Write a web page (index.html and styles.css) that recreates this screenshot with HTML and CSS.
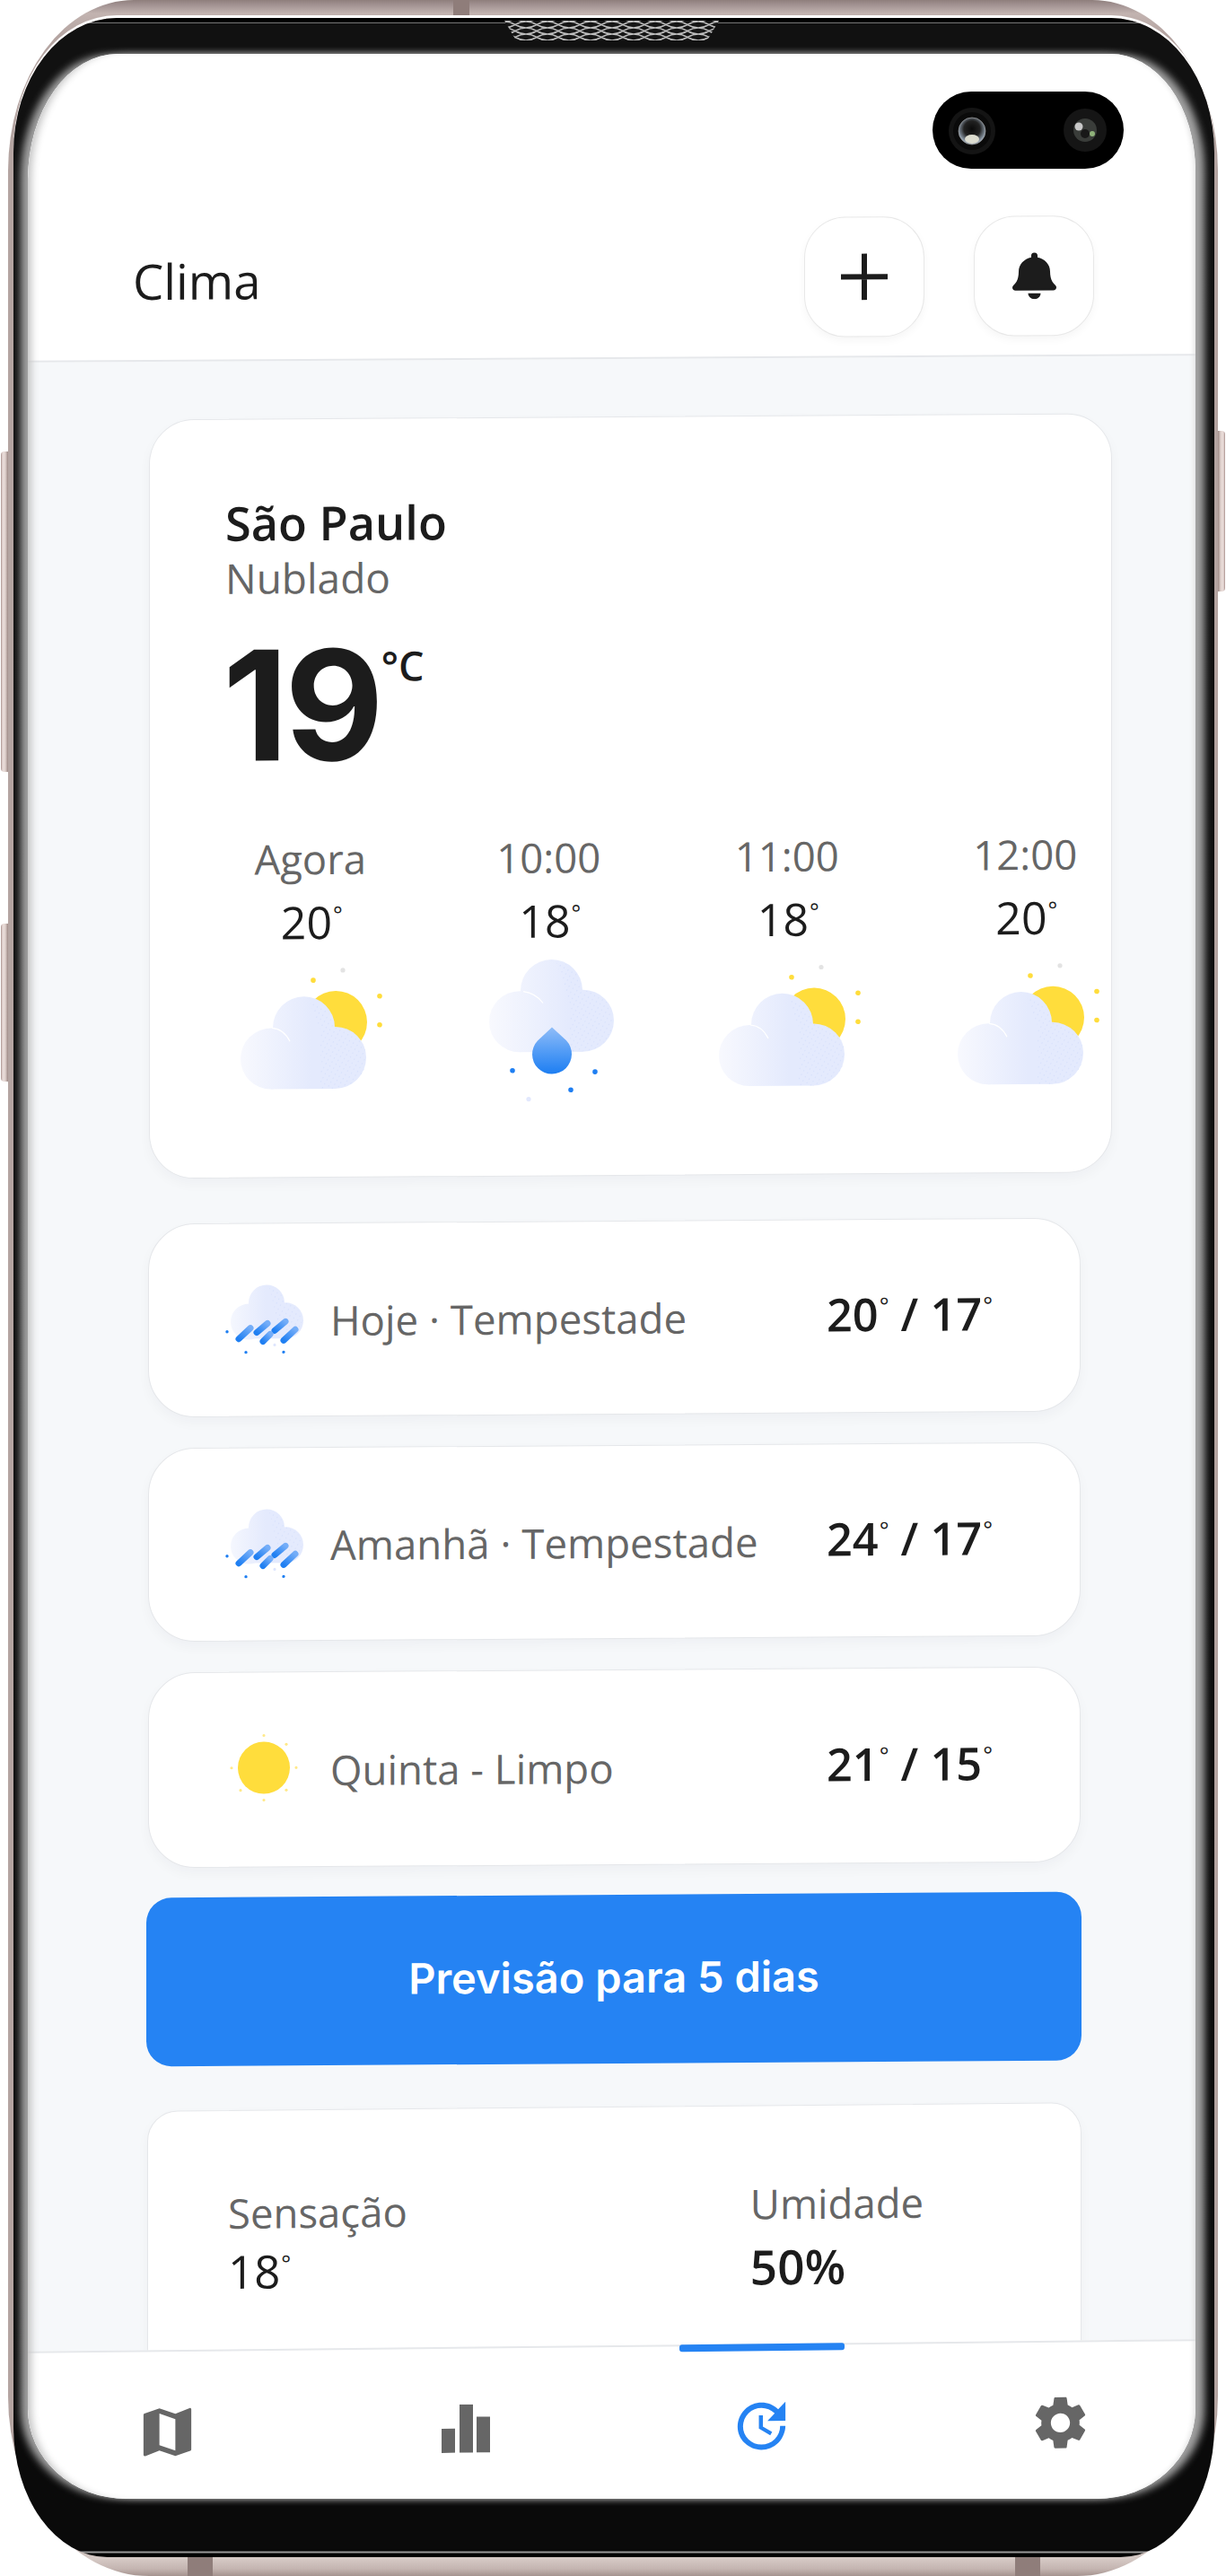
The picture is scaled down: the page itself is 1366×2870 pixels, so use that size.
FILE: index.html
```html
<!DOCTYPE html>
<html lang="pt-BR">
<head>
<meta charset="utf-8">
<title>Clima</title>
<link rel="stylesheet" href="styles.css">
</head>
<body>
<svg class="defs" width="0" height="0" aria-hidden="true">
  <defs>
    <linearGradient id="cloudA" gradientUnits="userSpaceOnUse" x1="5" y1="0" x2="85" y2="0">
      <stop offset="0" stop-color="#f8f9fe"/><stop offset="1" stop-color="#e4eafd"/>
    </linearGradient>
    <linearGradient id="cloudB" gradientUnits="userSpaceOnUse" x1="5" y1="0" x2="95" y2="0">
      <stop offset="0" stop-color="#f8f9fe"/><stop offset="1" stop-color="#e4eafd"/>
    </linearGradient>
    <linearGradient id="cloudC" gradientUnits="userSpaceOnUse" x1="8" y1="0" x2="50" y2="0">
      <stop offset="0" stop-color="#f6f8fe"/><stop offset="1" stop-color="#e4eafd"/>
    </linearGradient>
    <linearGradient id="dropG" x1="0" y1="0" x2="0" y2="1">
      <stop offset="0" stop-color="#90bdf8"/><stop offset="0.45" stop-color="#5aa0f6"/><stop offset="1" stop-color="#1d7ef2"/>
    </linearGradient>
    <linearGradient id="pill" x1="0" y1="1" x2="1" y2="0">
      <stop offset="0" stop-color="#1f7ff2"/><stop offset="1" stop-color="#74adf8"/>
    </linearGradient>
    <pattern id="stipple" width="5" height="5" patternUnits="userSpaceOnUse" patternTransform="rotate(30)">
      <circle cx="2.5" cy="2.5" r="0.6" fill="#c9d5fb"/>
    </pattern>
    <pattern id="mesh" width="48" height="14" patternUnits="userSpaceOnUse" y="1">
      <path d="M0 0 C12 0 12 7 24 7 C36 7 36 0 48 0 M0 7 C12 7 12 0 24 0 C36 0 36 7 48 7 M0 7 C12 7 12 14 24 14 C36 14 36 7 48 7 M0 14 C12 14 12 7 24 7 C36 7 36 14 48 14" fill="none" stroke="#bdbdbd" stroke-width="1.5"/>
    </pattern>
    <symbol id="cloud-sun" viewBox="0 0 170 140">
      <circle cx="113" cy="62" r="35" fill="#ffdd3c"/>
      <circle cx="88" cy="15" r="2.8" fill="#ffdd3c"/>
      <circle cx="162" cy="33" r="2.8" fill="#ffdd3c"/>
      <circle cx="162" cy="65" r="2.8" fill="#ffdd3c"/>
      <circle cx="121" cy="4" r="2.6" fill="#e3e3e3"/>
      <g fill="url(#cloudA)">
        <circle cx="41" cy="102" r="34"/>
        <circle cx="77.5" cy="67.5" r="34.5"/>
        <circle cx="112.5" cy="101.5" r="34.5"/>
        <rect x="41" y="70" width="72" height="66"/>
      </g>
      <path d="M84 40 A34 34 0 0 1 112 67 A34 34 0 0 1 147 101 A34 34 0 0 1 112 136 H96 V70 Z" fill="url(#stipple)" opacity=".7"/>
      <path d="M42 68 Q55 69 62 83" fill="none" stroke="#fff" stroke-width="1.2"/>
    </symbol>
    <symbol id="cloud-drop" viewBox="0 0 150 175">
      <g fill="url(#cloudB)">
        <circle cx="40" cy="79.500" r="34"/>
        <circle cx="75.500" cy="45" r="34.500"/>
        <circle cx="110.500" cy="79" r="34.500"/>
        <rect x="40" y="60" width="70" height="53.500"/>
      </g>
      <path d="M80 12 A34 34 0 0 1 109 45 A34 34 0 0 1 144 79 A34 34 0 0 1 110 113 H96 V60 Z" fill="url(#stipple)" opacity=".7"/>
      <path d="M44 46 Q58 48 66 59" fill="none" stroke="#fff" stroke-width="1.200"/>
      <path d="M76 86 L60 101 A22 22 0 1 0 92 101 Z" fill="url(#dropG)"/>
      <circle cx="32" cy="134" r="2.800" fill="#1f7ff2"/>
      <circle cx="124" cy="136" r="2.800" fill="#1f7ff2"/>
      <circle cx="97" cy="156" r="2.800" fill="#1f7ff2"/>
      <circle cx="50" cy="166" r="2.600" fill="#e2e8fd"/>
    </symbol>
    <symbol id="cloud-rain" viewBox="0 0 100 90">
      <g fill="url(#cloudC)">
        <circle cx="31" cy="48" r="20"/>
        <circle cx="51" cy="27" r="20"/>
        <circle cx="72" cy="47" r="20"/>
        <rect x="31" y="35" width="41" height="32"/>
      </g>
      <path d="M54 10 A20 20 0 0 1 71 27 A20 20 0 0 1 90 47 V58 H66 Z" fill="url(#stipple)" opacity=".7"/>
      <g fill="none" stroke="url(#pill)" stroke-width="7" stroke-linecap="round">
        <path d="M20 67 L33 55"/>
        <path d="M40 60 L52 50"/>
        <path d="M60 58 L72 48"/>
        <path d="M47 70 L55 62"/>
        <path d="M70 69 L83 57"/>
      </g>
      <circle cx="7" cy="59" r="1.700" fill="#1f7ff2"/>
      <circle cx="28" cy="82" r="1.700" fill="#1f7ff2"/>
      <circle cx="70" cy="82" r="1.700" fill="#1f7ff2"/>
      <circle cx="60" cy="74" r="1.600" fill="#dfe6fd"/>
    </symbol>
  </defs>
</svg>

<div class="device">
  <span class="key key-left-a"></span>
  <span class="key key-left-b"></span>
  <span class="key key-right"></span>
  <span class="seam seam-top"></span>
  <span class="seam seam-bottom-a"></span>
  <span class="seam seam-bottom-b"></span>

  <div class="bezel">
    <svg class="speaker" viewBox="0 0 239 22" aria-hidden="true">
      <polygon points="0,0 239,0 226,22 13,22" fill="#161616"/>
      <polygon points="0,0 239,0 226,22 13,22" fill="url(#mesh)"/>
    </svg>

    <div class="screen">
      <div class="camera">
        <svg class="lens lens-a" viewBox="0 0 52 52" aria-hidden="true">
          <defs>
            <radialGradient id="lensA" cx="0.5" cy="0.42" r="0.6">
              <stop offset="0" stop-color="#0a0a0a"/><stop offset="0.5" stop-color="#222"/><stop offset="0.85" stop-color="#8a97a5"/><stop offset="1" stop-color="#a9b4c0"/>
            </radialGradient>
          </defs>
          <circle cx="26" cy="26" r="26" fill="#141414"/>
          <circle cx="26" cy="26" r="21" fill="#0a0a0a"/>
          <circle cx="26" cy="26" r="15" fill="url(#lensA)" stroke="#aaa" stroke-width=".6"/>
          <ellipse cx="26" cy="35" rx="8" ry="5" fill="#dcdccf"/>
        </svg>
        <svg class="lens lens-b" viewBox="0 0 48 48" aria-hidden="true">
          <circle cx="24" cy="24" r="24" fill="#151515"/>
          <circle cx="24" cy="24" r="13" fill="#3a3d3a"/>
          <circle cx="17" cy="20" r="4.500" fill="#c8c8c8"/>
          <circle cx="32" cy="28" r="3" fill="#8fb27a"/>
          <circle cx="24" cy="28" r="5" fill="#181818"/>
        </svg>
      </div>

      <header class="appbar">
        <h1 class="appbar-title">Clima</h1>
        <div class="appbar-actions">
          <button class="round-btn" type="button" aria-label="Adicionar">
            <svg class="icon-plus" viewBox="0 0 52 52"><path d="M26 0V52M0 26H52" fill="none" stroke="#1c1c1c" stroke-width="6"/></svg>
          </button>
          <button class="round-btn" type="button" aria-label="Notificações">
            <svg class="icon-bell" viewBox="0 0 448 512" preserveAspectRatio="none"><path fill="#1c1c1c" d="M224 512c35.320 0 63.970-28.650 63.970-64H160.030c0 35.350 28.650 64 63.970 64zm215.390-149.710c-19.320-20.760-55.470-51.990-55.470-154.290 0-77.700-54.480-139.900-127.940-155.160V32c0-17.670-14.320-32-31.980-32s-31.980 14.330-31.980 32v20.840C118.560 68.100 64.080 130.300 64.080 208c0 102.300-36.150 133.530-55.470 154.290-6 6.450-8.660 14.160-8.610 21.710.110 16.400 12.980 32 32.100 32h383.800c19.120 0 32-15.600 32.100-32 .050-7.550-2.610-15.270-8.610-21.710z"/></svg>
          </button>
        </div>
      </header>

      <main class="content">
        <section class="card current">
          <h2 class="city">São Paulo</h2>
          <p class="cond">Nublado</p>
          <div class="now">
            <span class="now-temp">19</span><span class="now-unit">°C</span>
          </div>
          <div class="hours">
            <div class="hour">
              <span class="hour-label">Agora</span>
              <span class="hour-temp">20<sup class="deg">°</sup></span>
              <svg class="hour-icon"><use href="#cloud-sun"/></svg>
            </div>
            <div class="hour">
              <span class="hour-label">10:00</span>
              <span class="hour-temp">18<sup class="deg">°</sup></span>
              <svg class="hour-icon hour-icon-rain"><use href="#cloud-drop"/></svg>
            </div>
            <div class="hour">
              <span class="hour-label">11:00</span>
              <span class="hour-temp">18<sup class="deg">°</sup></span>
              <svg class="hour-icon"><use href="#cloud-sun"/></svg>
            </div>
            <div class="hour">
              <span class="hour-label">12:00</span>
              <span class="hour-temp">20<sup class="deg">°</sup></span>
              <svg class="hour-icon"><use href="#cloud-sun"/></svg>
            </div>
          </div>
        </section>

        <section class="days">
          <article class="card day">
            <svg class="day-icon"><use href="#cloud-rain"/></svg>
            <span class="day-name">Hoje · Tempestade</span>
            <span class="day-temp">20<sup class="deg">°</sup> / 17<sup class="deg">°</sup></span>
          </article>
          <article class="card day">
            <svg class="day-icon"><use href="#cloud-rain"/></svg>
            <span class="day-name">Amanhã · Tempestade</span>
            <span class="day-temp">24<sup class="deg">°</sup> / 17<sup class="deg">°</sup></span>
          </article>
          <article class="card day day-clear">
            <svg class="day-icon" viewBox="0 0 100 90">
              <circle cx="50" cy="45" r="29" fill="#ffdd3c"/>
              <g fill="#ffe98a">
                <circle cx="50" cy="9" r="1.600"/><circle cx="14" cy="45" r="1.600"/><circle cx="86" cy="45" r="1.600"/><circle cx="50" cy="81" r="1.600"/>
                <circle cx="24" cy="70" r="1.600"/><circle cx="75" cy="70" r="1.600"/><circle cx="75" cy="19" r="1.600"/>
              </g>
            </svg>
            <span class="day-name">Quinta - Limpo</span>
            <span class="day-temp">21<sup class="deg">°</sup> / 15<sup class="deg">°</sup></span>
          </article>
        </section>

        <button class="forecast-btn" type="button">Previsão para 5 dias</button>

        <section class="card stats">
          <div class="stat">
            <span class="stat-label">Sensação</span>
            <span class="stat-value">18<sup class="deg">°</sup></span>
          </div>
          <div class="stat stat-right">
            <span class="stat-label">Umidade</span>
            <span class="stat-value stat-strong">50%</span>
          </div>
        </section>
      </main>

      <nav class="tabs">
        <a class="tab" href="#" aria-label="Mapa">
          <svg viewBox="0 0 24 24"><path d="M20.500 3l-.160.030L15 5.100 9 3 3.360 4.900c-.210.070-.360.250-.360.480V20.500c0 .280.220.500.500.500l.160-.030L9 18.900l6 2.100 5.640-1.900c.210-.070.360-.250.360-.480V3.500c0-.280-.220-.500-.500-.500zM15 19l-6-2.110V5l6 2.110V19z"/></svg>
        </a>
        <a class="tab" href="#" aria-label="Gráficos">
          <svg viewBox="0 0 54 54"><path d="M0 27h15v27H0zM20 0h15v54H20zM39 14h15v40H39z"/></svg>
        </a>
        <a class="tab tab-active" href="#" aria-label="Histórico">
          <svg viewBox="0 0 24 24"><path d="M21 10.120h-6.780l2.740-2.820c-2.730-2.700-7.150-2.800-9.880-.1-2.730 2.710-2.730 7.080 0 9.790s7.150 2.710 9.880 0C18.320 15.650 19 14.080 19 12.100h2c0 1.980-.88 4.550-2.640 6.290-3.510 3.480-9.210 3.480-12.720 0-3.500-3.470-3.530-9.110-.02-12.580s9.140-3.470 12.650 0L21 3v7.120zM12.500 8v4.250l3.500 2.080-.72 1.210L11 13V8h1.500z"/></svg>
        </a>
        <a class="tab" href="#" aria-label="Ajustes">
          <svg viewBox="0 0 24 24"><path d="M19.140 12.940c.04-.3.060-.61.060-.94 0-.32-.02-.64-.07-.94l2.030-1.580c.18-.14.23-.41.12-.61l-1.920-3.320c-.12-.22-.37-.29-.59-.22l-2.390.96c-.5-.38-1.030-.7-1.620-.94l-.36-2.540c-.04-.24-.24-.41-.48-.41h-3.840c-.24 0-.43.170-.47.410l-.36 2.540c-.59.240-1.130.570-1.620.940l-2.390-.96c-.22-.08-.47 0-.59.220L2.740 8.870c-.12.210-.08.470.12.610l2.030 1.580c-.05.3-.09.630-.09.940s.02.640.07.940l-2.030 1.580c-.18.140-.23.410-.12.610l1.920 3.320c.12.220.37.290.59.220l2.390-.96c.5.380 1.030.7 1.620.94l.36 2.540c.05.240.24.410.48.410h3.840c.24 0 .44-.17.47-.41l.36-2.540c.59-.24 1.130-.56 1.620-.94l2.390.96c.22.080.47 0 .59-.22l1.920-3.320c.12-.22.070-.47-.12-.61l-2.010-1.580zM12 15.600c-1.980 0-3.600-1.620-3.600-3.600s1.620-3.600 3.600-3.600 3.600 1.620 3.600 3.600-1.620 3.600-3.600 3.600z"/></svg>
        </a>
      </nav>
    </div>
  </div>
</div>
</body>
</html>
```

FILE: styles.css
```css
* { box-sizing: border-box; }

html, body {
  margin: 0;
  height: 2870px;
  background: #fff;
  overflow: hidden;
}

.defs { position: absolute; }

/* ---------- device shell ---------- */
.device {
  position: relative;
  width: 1348px;
  height: 2870px;
  margin-left: 9px;
  padding: 20px 4px 21px 6px;
  border-radius: 140px 140px 157px 157px / 190px 190px 200px 200px;
  background: linear-gradient(180deg, #8f7f7c 0, #a09090 5px, #c2b3b0 15px, #b4a4a1 40px, #b4a4a1 2830px, #d6cac6 2850px, #c4b5b1 2862px, #a5938f 2870px);
}

.key {
  position: absolute;
  border-radius: 4px 0 0 4px;
  background: linear-gradient(90deg, #a8908c 0, #eaddda 25%, #e2d4d0 60%, #9c8884 100%);
}
.key-left-a { left: -8px; top: 503px; width: 8px; height: 357px; }
.key-left-b { left: -8px; top: 1029px; width: 8px; height: 176px; }
.key-right { right: -8px; top: 480px; width: 8px; height: 179px; transform: scaleX(-1); }

.seam { position: absolute; background: #8f7d7a; }
.seam-top { left: 496px; top: 0; width: 18px; height: 20px; }
.seam-bottom-a { left: 200px; bottom: 0; width: 28px; height: 21px; }
.seam-bottom-b { left: 1122px; bottom: 0; width: 28px; height: 21px; }

.bezel {
  position: relative;
  height: 100%;
  padding: 40px 21px 65px 16px;
  overflow: hidden;
  border-radius: 115px 115px 105px 105px / 150px 150px 145px 145px;
  background: linear-gradient(180deg, #000 0, #000 5px, #777 5px, #777 6px, #111 6px, #111 70px, #0a0a0a 2700px, #0a0a0a 2822px, #999 2823px, #999 2824px, #000 2825px);
  box-shadow: 0 -3px 0 #fff;
}

.speaker {
  position: absolute;
  left: 547px;
  top: 3px;
  width: 239px;
  height: 22px;
}

/* ---------- screen ---------- */
.screen {
  position: relative;
  z-index: 1;
  display: flex;
  flex-direction: column;
  height: 100%;
  border-radius: 100px 95px 110px 110px / 140px 130px 100px 100px;
  overflow: hidden;
  background: #f6f8fa;
  color: #1c1c1c;
  font-family: "Open Sans", "Liberation Sans", sans-serif;
}

/* glass edge: grey glow around the curved screen, shade on the panel itself */
.bezel::after {
  content: "";
  position: absolute;
  top: 40px;
  left: 16px;
  right: 21px;
  bottom: 65px;
  border-radius: 100px 95px 110px 110px / 140px 130px 100px 100px;
  box-shadow: -9px 0 9px -1px #a2a2a2, 11px 0 9px -1px #a2a2a2;
}
.screen::after {
  content: "";
  position: absolute;
  z-index: 5;
  inset: 0;
  border-radius: inherit;
  box-shadow: inset 9px 0 9px -5px #c4c4c4, inset -5px 0 6px -4px #dcdcdc;
  pointer-events: none;
}

.camera {
  position: absolute;
  z-index: 4;
  top: 42px;
  right: 80px;
  width: 213px;
  height: 86px;
  border-radius: 43px;
  background: #000;
}
.lens { position: absolute; }
.lens-a { left: 18px; top: 18px; width: 52px; height: 52px; }
.lens-b { left: 146px; top: 19px; width: 48px; height: 48px; }

/* ---------- app bar ---------- */
.appbar {
  flex: none;
  display: flex;
  align-items: flex-end;
  justify-content: space-between;
  height: 380px;
  margin: -40px -30px 0;
  padding: 0 143px 21px 147px;
  background: #fff;
  border-bottom: 2px solid #e6e8eb;
  transform: skewY(-0.33deg);
  transform-origin: 682px 0;
}

.appbar-title {
  margin: 0 0 31px;
  font-size: 54.5px;
  font-weight: 500;
  line-height: 72px;
}

.appbar-actions { display: flex; gap: 55px; }

.round-btn {
  display: flex;
  align-items: center;
  justify-content: center;
  width: 134px;
  height: 134px;
  padding: 0;
  border: 1.500px solid #e8e8e8;
  border-radius: 46px;
  background: #fff;
  box-shadow: 0 4px 10px rgba(0, 0, 0, .04);
}
.icon-plus { width: 52px; height: 52px; }
.icon-bell { width: 49px; height: 52px; }

/* ---------- content ---------- */
.content {
  flex: 1;
  min-height: 0;
  padding: 64px 0 0 134px;
  transform: skewY(-0.37deg);
  transform-origin: 652px 0;
}

.card {
  background: #fff;
  border: 1.500px solid #e5e7ea;
  box-shadow: 0 6px 14px rgba(30, 40, 60, .035);
}

.current {
  width: 1073px;
  height: 846px;
  margin-left: 1px;
  padding: 79px 0 0 84px;
  border-radius: 50px;
}

.city {
  margin: 0;
  font-size: 52.300px;
  font-weight: 600;
  line-height: 72px;
}

.cond {
  margin: -5px 0 0;
  color: #666;
  font-size: 46px;
  line-height: 60px;
}

.now {
  display: flex;
  align-items: flex-start;
  margin: 24px 0 0 -3px;
  height: 176px;
}
.now-temp {
  font-family: Inter, "Open Sans", sans-serif;
  font-size: 170px;
  font-weight: 700;
  letter-spacing: -4px;
  line-height: 176px;
}
.now-unit {
  margin: 21px 0 0 1px;
  font-size: 45px;
  font-weight: 600;
  line-height: 48px;
}

.hours {
  display: flex;
  margin: 53px 0 0 -84px;
}
.hour {
  flex: none;
  display: flex;
  flex-direction: column;
  align-items: center;
  width: 265.500px;
}
.hour:first-child { margin-left: 46px; }
.hour-label { color: #666; font-size: 45.500px; line-height: 60px; }
.hour-temp { margin-top: 7px; padding-left: 3px; font-size: 50px; line-height: 68px; }
.hour-icon { width: 170px; height: 140px; margin-top: 16px; }
.hour-icon-rain { width: 150px; height: 175px; margin-top: -1px; }
.hour + .hour .hour-icon { margin-left: 5px; }

.deg {
  display: inline-block;
  margin-left: 1px;
  font-size: .5em;
  font-weight: 400;
  line-height: 0;
  vertical-align: .72em;
}

.days {
  display: flex;
  flex-direction: column;
  gap: 34px;
  margin-top: 50px;
}
.day {
  display: flex;
  align-items: center;
  width: 1039px;
  height: 216px;
  padding: 0 97px 0 80px;
  border-radius: 52px;
}
.day-clear { height: 218px; }
.day-icon { flex: none; width: 100px; height: 90px; margin-top: -2px; }
.day-clear .day-icon { margin: -4px 2px 0 -2px; }
.day-name { flex: 1; margin-left: 22px; color: #666; font-size: 45.600px; }
.day-temp { margin-top: -6px; font-size: 50.500px; font-weight: 600; white-space: nowrap; }

.forecast-btn {
  display: block;
  width: 1042px;
  height: 188px;
  margin: 33px 0 0 -2px;
  padding: 0 0 6px;
  border: 0;
  border-radius: 28px;
  background: #2583f3;
  color: #fff;
  font-family: Inter, "Open Sans", sans-serif;
  font-size: 47px;
  font-weight: 600;
}

.stats {
  display: flex;
  width: 1041px;
  height: 380px;
  margin: 48px 0 0 -1px;
  padding: 83px 0 0 89px;
  border-radius: 34px;
  transform: skewY(-0.15deg);
}
.stat { display: flex; flex-direction: column; }
.stat-right { margin-left: 382px; margin-top: -5px; }
.stat-label { color: #666; font-size: 45.500px; line-height: 60px; }
.stat-value { margin-top: 1px; font-size: 51px; line-height: 68px; font-weight: 500; }
.stat-strong { margin-top: 7px; font-size: 53px; font-weight: 600; }

/* ---------- tab bar ---------- */
.tabs {
  flex: none;
  position: relative;
  z-index: 2;
  display: flex;
  justify-content: space-between;
  height: 201px;
  margin: 0 -30px -30px;
  padding: 54px 145px 0 150px;
  background: #fff;
  border-top: 2px solid #e6e8eb;
  transform: skewY(-0.6deg);
  transform-origin: 682px 0;
}
.tab {
  position: relative;
  display: block;
  width: 71px;
  height: 71px;
  color: #666;
}
.tab svg { display: block; width: 100%; height: 100%; fill: currentColor; }
.tab:nth-child(2) svg { width: 54px; height: 54px; margin: 8px 0 0 9px; }
.tab-active { margin: 0 1px 0 -1px; color: #2583f3; }
.tab-active::before {
  content: "";
  position: absolute;
  left: -56px;
  top: -56px;
  width: 184px;
  height: 8px;
  border-radius: 3px;
  background: #2583f3;
}
```
